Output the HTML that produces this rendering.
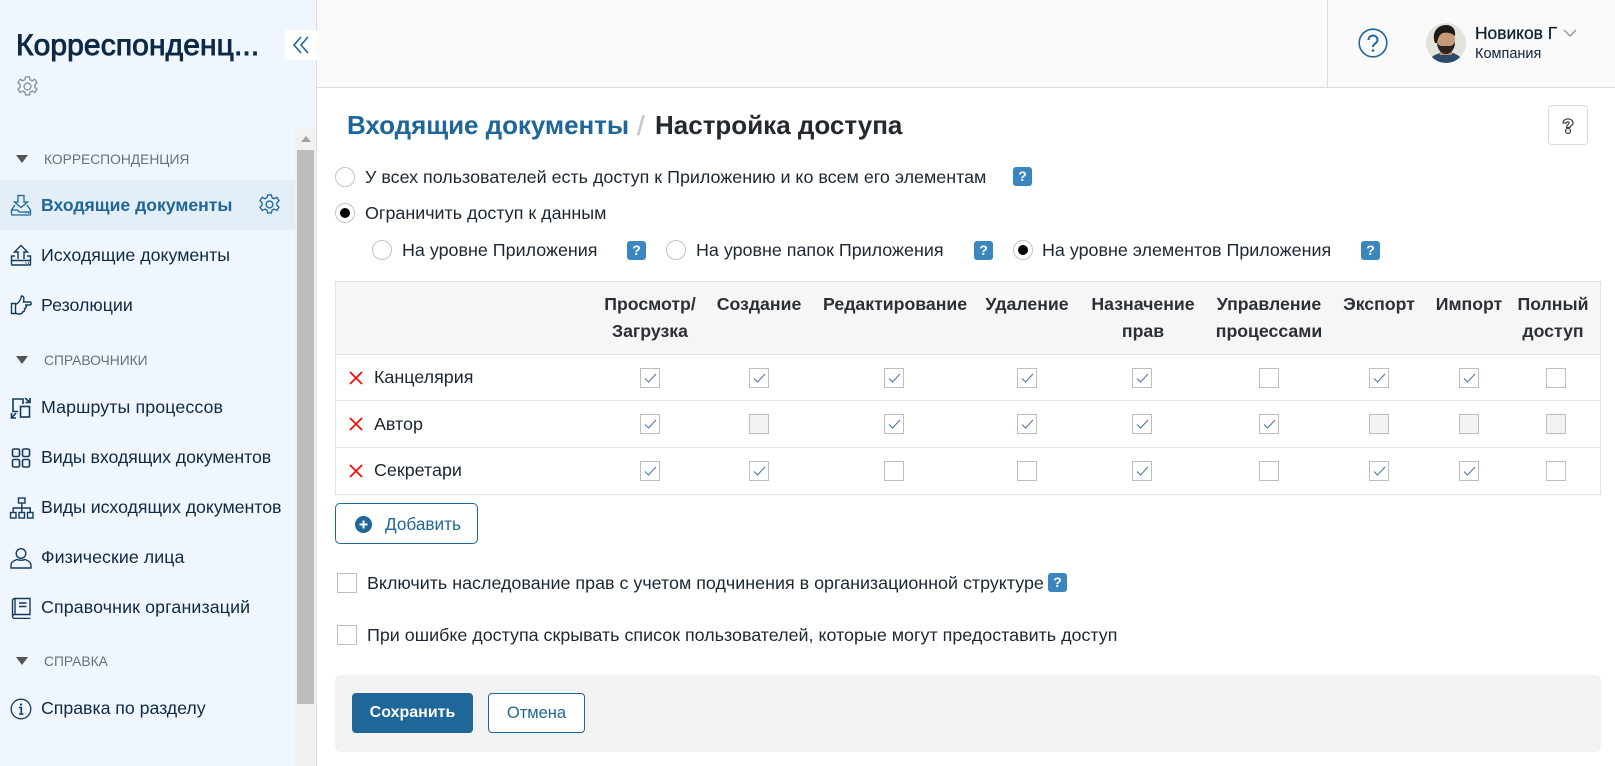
<!DOCTYPE html>
<html lang="ru"><head><meta charset="utf-8"><title>Настройка доступа</title>
<style>
*{box-sizing:border-box}
html,body{margin:0;padding:0}
body{width:1615px;height:766px;overflow:hidden;position:relative;background:#fff;font-family:"Liberation Sans",sans-serif;color:#1b2733;font-size:17.9px}
.a{position:absolute}
.t{position:absolute;white-space:nowrap;line-height:24px;height:24px}
.m{-webkit-text-stroke:.3px currentColor}
.n{font-size:17.8px;color:#0f2a45;left:41px}
.s{font-size:13.8px;color:#66717c;left:44px;line-height:18px;height:18px}
.tri{position:absolute;left:16px;width:0;height:0;border-left:6.5px solid transparent;border-right:6.5px solid transparent;border-top:8px solid #555}
.ic{position:absolute;left:10px;width:22px;height:22px;fill:none;stroke:#143a5c;stroke-width:1.4}
.r{position:absolute;width:20px;height:20px;border:1px solid #c4c4c4;border-radius:50%;background:#fff}
.r.on::after{content:"";position:absolute;left:4px;top:4px;width:10px;height:10px;border-radius:50%;background:#000}
.b{position:absolute;width:19px;height:19px;background:#3a87bf;border-radius:3px;color:#fff;font-weight:bold;font-size:14px;line-height:19px;text-align:center}
.h{position:absolute;width:140px;text-align:center;font-size:17.7px;font-weight:bold;line-height:27px;color:#2b3036;white-space:nowrap}
.l{position:absolute;left:335px;width:1266px;height:1px;background:#e3e3e8}
.c{position:absolute;width:20px;height:20px;border:1px solid #bdbdbd;background:#fff}
.c.d{background:#f3f3f3}
.c svg{position:absolute;left:3px;top:3px;width:13px;height:13px;fill:none;stroke:#4a6fa8;stroke-width:1}
.x{position:absolute;left:349px;width:14px;height:14px;fill:none;stroke:#f00;stroke-width:1.6}
</style></head><body>

<!-- sidebar -->
<div class="a" style="left:0;top:0;width:317px;height:766px;background:#f0f6fe;border-right:1px solid #dcdcdc"></div>
<div class="t" style="left:16px;top:26px;font-size:30px;line-height:40px;height:40px;color:#0c2a46;-webkit-text-stroke:.9px #0c2a46;letter-spacing:.1px">Корреспонденц...</div>
<div class="a" style="left:285px;top:30px;width:32px;height:30px;background:#fff;border-radius:3px 0 0 3px"></div>
<svg class="a" style="left:291px;top:34px" width="20" height="22" viewBox="0 0 20 22" fill="none" stroke="#1f6699" stroke-width="1.6"><path d="M10 3L3 11l7 8M17 3l-7 8 7 8"/></svg>
<svg class="a" style="left:16px;top:75px" width="23" height="23" viewBox="0 0 24 24" fill="none" stroke="#8a8f94" stroke-width="1.4"><circle cx="12" cy="12" r="3.6"/><path d="M10 2h4l.7 3 2.2 1 2.7-1.500 2.300 3.500-2.200 2.200v2.400l2.200 2.200-2.300 3.500-2.700-1.500-2.200 1-.7 3h-4l-.7-3-2.200-1-2.700 1.500-2.300-3.500 2.200-2.200v-2.400L2.100 8l2.300-3.500L7.100 6l2.200-1z"/></svg>

<div class="a" style="left:295px;top:129px;width:21px;height:637px;background:#f1f1f1"></div>
<div class="a" style="left:301px;top:136px;width:0;height:0;border-left:5px solid transparent;border-right:5px solid transparent;border-bottom:6px solid #a3a3a3"></div>
<div class="a" style="left:297px;top:150px;width:17px;height:554px;background:#bdbdbd"></div>

<div class="tri" style="top:155px"></div>
<div class="t s" style="top:151px">КОРРЕСПОНДЕНЦИЯ</div>
<div class="a" style="left:0;top:180px;width:295px;height:50px;background:#e4eef6"></div>
<svg class="ic" style="top:194px;stroke:#1f6699;stroke-width:1.3" viewBox="0 0 22 22"><path d="M8 1.500h6v6.500h3.500L11 13.500 4.500 8H8zM5 11L1.500 16v4a1 1 0 0 0 1 1h17a1 1 0 0 0 1-1v-4L17 11M1.500 16h6l1.500 2h11.500M15.500 19h1M18 19h1"/></svg>
<div class="t n" style="top:193px;font-size:17.6px;color:#1f6699;font-weight:bold">Входящие документы</div>
<svg class="a" style="left:258px;top:193px" width="23" height="23" viewBox="0 0 24 24" fill="none" stroke="#1f6699" stroke-width="1.4"><circle cx="12" cy="12" r="3.600"/><path d="M10 2h4l.7 3 2.200 1 2.700-1.500 2.300 3.500-2.200 2.200v2.400l2.200 2.200-2.300 3.500-2.700-1.500-2.200 1-.7 3h-4l-.7-3-2.200-1-2.700 1.500-2.300-3.500 2.200-2.200v-2.400L2.100 8l2.300-3.500L7.100 6l2.200-1z"/></svg>

<svg class="ic" style="top:244px" viewBox="0 0 22 22"><path d="M8 15v-7H4.500L11 1.500 17.500 8H14v7M5 12H1.500v8.500a.5.500 0 0 0 .5.500h18a.5.500 0 0 0 .5-.5V12H17M1.500 16.500H20.500M15.500 19h1M18 19h1"/></svg>
<div class="t n" style="top:243px">Исходящие документы</div>
<svg class="ic" style="top:294px" viewBox="0 0 22 22"><path d="M1.500 9.500h4v10h-4zM5.500 10.500c3-1 5-4 6-8.500 2 0 3 1.500 2 6h6.500c1.500 0 1.500 3 0 3h-5M16 11c1 2-.5 3.500-1.500 3.500 .5 2-.5 3.500-2 3.500 0 1-1 2-2 2H8l-2.500-1"/></svg>
<div class="t n" style="top:293px">Резолюции</div>

<div class="tri" style="top:356px"></div>
<div class="t s" style="top:352px">СПРАВОЧНИКИ</div>
<svg class="ic" style="top:397px;stroke-width:1.6" viewBox="0 0 22 22"><rect x="10.500" y="9.500" width="9" height="10.500"/><path d="M8 14.500H3V2h10v5M15 1l5 4.500M20 1v4.500h-4.500M1.500 21l4.500-5M1.500 16v5H6"/></svg>
<div class="t n" style="top:395px;letter-spacing:.11px">Маршруты процессов</div>
<svg class="ic" style="top:447px;stroke-width:1.6" viewBox="0 0 22 22"><rect x="2.500" y="2" width="7" height="7.500" rx="1.500"/><rect x="12.500" y="2" width="7" height="7.500" rx="1.500"/><rect x="2.500" y="12.500" width="7" height="7.500" rx="1.500"/><rect x="12.500" y="12.500" width="7" height="7.500" rx="1.500"/></svg>
<div class="t n" style="top:445px;letter-spacing:-.08px">Виды входящих документов</div>
<svg class="ic" style="top:497px;left:9px;width:26px;height:22px" viewBox="0 0 26 22"><rect x="9.500" y="1" width="6.500" height="5"/><rect x="1.500" y="15.500" width="5.500" height="5.500"/><rect x="10" y="15.500" width="5.500" height="5.500"/><rect x="18.500" y="15.500" width="5.500" height="5.500"/><path d="M12.800 6v9.500M4.200 15.500V11h17v4.500"/></svg>
<div class="t n" style="top:495px;letter-spacing:-.04px">Виды исходящих документов</div>
<svg class="ic" style="top:547px" viewBox="0 0 22 22"><circle cx="11" cy="6.500" r="4.800"/><path d="M1 21v-3c0-3 3-4.500 6-5.500 2 1 6 1 8 0 3 1 6 2.500 6 5.500v3z"/></svg>
<div class="t n" style="top:545px;letter-spacing:.06px">Физические лица</div>
<svg class="ic" style="top:597px" viewBox="0 0 22 22"><path d="M5 1.500h15v16H5M5 1.500C3 1.500 2.500 2.500 2.500 4v15c0 1.500 1 2.500 2.500 2.500h15.500M5 1.500v16c-1.500 0-2.500.5-2.500 1.500M9 6h7.500M9 9.500h7.500"/></svg>
<div class="t n" style="top:595px;letter-spacing:.13px">Справочник организаций</div>

<div class="tri" style="top:657px"></div>
<div class="t s" style="top:653px">СПРАВКА</div>
<svg class="ic" style="top:698px;stroke-width:1.3" viewBox="0 0 22 22"><circle cx="11" cy="11" r="9.800"/><circle cx="11" cy="6.500" r="1.100" fill="#143a5c" stroke="none"/><path d="M9 9.500h2.300v6.500M9 16h4.500" stroke-width="1.600"/></svg>
<div class="t n" style="top:696px;letter-spacing:-.05px">Справка по разделу</div>

<!-- header -->
<div class="a" style="left:317px;top:0;width:1298px;height:88px;background:#fafafa;border-bottom:1px solid #dcdcdc"></div>
<div class="a" style="left:1327px;top:0;width:1px;height:87px;background:#dcdcdc"></div>
<svg class="a" style="left:1358px;top:28px" width="30" height="30" viewBox="0 0 30 30" fill="none" stroke="#1f6699" stroke-width="1.600"><circle cx="15" cy="15" r="13.800"/><path d="M10.500 12c0-6 9-6 9 0 0 3.500-4.500 3.500-4.500 7" stroke-width="2"/><circle cx="15" cy="22.500" r="1.300" fill="#1f6699" stroke="none"/></svg>
<svg class="a" style="left:1426px;top:23px" width="40" height="40" viewBox="0 0 40 40"><defs><clipPath id="av"><circle cx="20" cy="20" r="20"/></clipPath></defs><g clip-path="url(#av)"><rect width="40" height="40" fill="#e4e2dc"/><path d="M3 40C4 33 10 31 15 30h12c5 2 9 4 10 10z" fill="#2c4a6b"/><rect x="14" y="24" width="12" height="8" fill="#b98a6a"/><ellipse cx="20" cy="17" rx="9" ry="12" fill="#c49a78"/><path d="M11 19c0 7 4 12 9 12s9-5 9-12c-2 3-3 4-5 4h-8c-2 0-4-1-5-4z" fill="#2b231e"/><path d="M9 20C5 9 12 2 20 2c6 0 10 4 9 11-3-3-8-4-12-3-3 1-5 4-6 10z" fill="#1d1917"/></g></svg>
<div class="t m" style="left:1475px;top:21px;font-size:17.4px;color:#0f2238">Новиков Г</div>
<svg class="a" style="left:1563px;top:29px" width="14" height="9" viewBox="0 0 14 9" fill="none" stroke="#8a949c" stroke-width="1.300"><path d="M1 1l6 6 6-6"/></svg>
<div class="t" style="left:1475px;top:42px;font-size:14.5px;color:#0f2238">Компания</div>

<!-- title -->
<div class="t" style="left:347px;top:108px;height:34px;line-height:34px;font-size:26px;font-weight:bold;letter-spacing:-.05px;color:#1f6699">Входящие документы</div>
<div class="t" style="left:637px;top:109px;height:34px;line-height:34px;font-size:27px;color:#c9c9c9;-webkit-text-stroke:.6px #c9c9c9">/</div>
<div class="t" style="left:655px;top:108px;height:34px;line-height:34px;font-size:26px;font-weight:bold;color:#23292f">Настройка доступа</div>
<div class="a" style="left:1548px;top:105px;width:40px;height:40px;border:1px solid #dcdcdc;border-radius:4px;background:#fff"></div>
<svg class="a" style="left:1561px;top:118px" width="14" height="17" viewBox="0 0 14 17" fill="none" stroke="#444" stroke-width="1.200"><path d="M2 5c0-5.500 10-5.500 10 0 0 3-3 2-3 4.500H5.500C5.500 6.500 8 7 8 5 8 3.500 5.500 3.500 5.500 5z"/><circle cx="7" cy="13" r="2.500"/></svg>

<!-- radios -->
<div class="r" style="left:335px;top:167px"></div>
<div class="t" style="left:365px;top:165px">У всех пользователей есть доступ к Приложению и ко всем его элементам</div>
<div class="b" style="left:1013px;top:167px">?</div>
<div class="r on" style="left:335px;top:203px"></div>
<div class="t" style="left:365px;top:201px">Ограничить доступ к данным</div>
<div class="r" style="left:372px;top:240px"></div>
<div class="t" style="left:402px;top:238px">На уровне Приложения</div>
<div class="b" style="left:627px;top:241px">?</div>
<div class="r" style="left:666px;top:240px"></div>
<div class="t" style="left:696px;top:238px">На уровне папок Приложения</div>
<div class="b" style="left:974px;top:241px">?</div>
<div class="r on" style="left:1013px;top:240px"></div>
<div class="t" style="left:1042px;top:238px">На уровне элементов Приложения</div>
<div class="b" style="left:1361px;top:241px">?</div>

<!-- table -->
<div class="a" style="left:335px;top:281px;width:1266px;height:214px;border:1px solid #e3e3e8;border-top-width:1px"></div>
<div class="a" style="left:336px;top:282px;width:1264px;height:72px;background:#f6f6f6"></div>
<div class="l" style="top:354px"></div><div class="l" style="top:400px"></div><div class="l" style="top:447px"></div>

<div class="h" style="left:580px;top:291px">Просмотр/<br>Загрузка</div>
<div class="h" style="left:689px;top:291px">Создание</div>
<div class="h" style="left:823px;top:291px">Редактирование</div>
<div class="h" style="left:957px;top:291px">Удаление</div>
<div class="h" style="left:1073px;top:291px">Назначение<br>прав</div>
<div class="h" style="left:1199px;top:291px">Управление<br>процессами</div>
<div class="h" style="left:1309px;top:291px">Экспорт</div>
<div class="h" style="left:1399px;top:291px">Импорт</div>
<div class="h" style="left:1483px;top:291px">Полный<br>доступ</div>

<svg class="x" style="top:371px" viewBox="0 0 14 14"><path d="M1 1l12 12M13 1L1 13"/></svg>
<div class="t" style="left:374px;top:365px">Канцелярия</div>
<svg class="x" style="top:417px" viewBox="0 0 14 14"><path d="M1 1l12 12M13 1L1 13"/></svg>
<div class="t" style="left:374px;top:412px">Автор</div>
<svg class="x" style="top:464px" viewBox="0 0 14 14"><path d="M1 1l12 12M13 1L1 13"/></svg>
<div class="t" style="left:374px;top:458px">Секретари</div>

<!-- row 1 -->
<div class="c" style="left:640px;top:368px"><svg viewBox="0 0 13 13"><path d="M1 6.500l3.500 3.500L12 2"/></svg></div>
<div class="c" style="left:749px;top:368px"><svg viewBox="0 0 13 13"><path d="M1 6.500l3.500 3.500L12 2"/></svg></div>
<div class="c" style="left:884px;top:368px"><svg viewBox="0 0 13 13"><path d="M1 6.500l3.500 3.500L12 2"/></svg></div>
<div class="c" style="left:1017px;top:368px"><svg viewBox="0 0 13 13"><path d="M1 6.500l3.500 3.500L12 2"/></svg></div>
<div class="c" style="left:1132px;top:368px"><svg viewBox="0 0 13 13"><path d="M1 6.500l3.500 3.500L12 2"/></svg></div>
<div class="c" style="left:1259px;top:368px"></div>
<div class="c" style="left:1369px;top:368px"><svg viewBox="0 0 13 13"><path d="M1 6.500l3.500 3.500L12 2"/></svg></div>
<div class="c" style="left:1459px;top:368px"><svg viewBox="0 0 13 13"><path d="M1 6.500l3.500 3.500L12 2"/></svg></div>
<div class="c" style="left:1546px;top:368px"></div>
<!-- row 2 -->
<div class="c" style="left:640px;top:414px"><svg viewBox="0 0 13 13"><path d="M1 6.500l3.500 3.500L12 2"/></svg></div>
<div class="c d" style="left:749px;top:414px"></div>
<div class="c" style="left:884px;top:414px"><svg viewBox="0 0 13 13"><path d="M1 6.500l3.500 3.500L12 2"/></svg></div>
<div class="c" style="left:1017px;top:414px"><svg viewBox="0 0 13 13"><path d="M1 6.500l3.500 3.500L12 2"/></svg></div>
<div class="c" style="left:1132px;top:414px"><svg viewBox="0 0 13 13"><path d="M1 6.500l3.500 3.500L12 2"/></svg></div>
<div class="c" style="left:1259px;top:414px"><svg viewBox="0 0 13 13"><path d="M1 6.500l3.500 3.500L12 2"/></svg></div>
<div class="c d" style="left:1369px;top:414px"></div>
<div class="c d" style="left:1459px;top:414px"></div>
<div class="c d" style="left:1546px;top:414px"></div>
<!-- row 3 -->
<div class="c" style="left:640px;top:461px"><svg viewBox="0 0 13 13"><path d="M1 6.500l3.500 3.500L12 2"/></svg></div>
<div class="c" style="left:749px;top:461px"><svg viewBox="0 0 13 13"><path d="M1 6.500l3.500 3.500L12 2"/></svg></div>
<div class="c" style="left:884px;top:461px"></div>
<div class="c" style="left:1017px;top:461px"></div>
<div class="c" style="left:1132px;top:461px"><svg viewBox="0 0 13 13"><path d="M1 6.500l3.500 3.500L12 2"/></svg></div>
<div class="c" style="left:1259px;top:461px"></div>
<div class="c" style="left:1369px;top:461px"><svg viewBox="0 0 13 13"><path d="M1 6.500l3.500 3.500L12 2"/></svg></div>
<div class="c" style="left:1459px;top:461px"><svg viewBox="0 0 13 13"><path d="M1 6.500l3.500 3.500L12 2"/></svg></div>
<div class="c" style="left:1546px;top:461px"></div>

<!-- add -->
<div class="a" style="left:335px;top:503px;width:143px;height:41px;border:1px solid #1f6699;border-radius:5px;background:#fff"></div>
<svg class="a" style="left:355px;top:516px" width="17" height="17" viewBox="0 0 17 17"><circle cx="8.500" cy="8.500" r="8.500" fill="#1f6699"/><path d="M8.500 4.500v8M4.500 8.500h8" stroke="#fff" stroke-width="2"/></svg>
<div class="t" style="left:385px;top:512px;color:#1f6699;font-size:17.2px">Добавить</div>

<!-- options -->
<div class="c" style="left:337px;top:573px"></div>
<div class="t" style="left:367px;top:571px">Включить наследование прав с учетом подчинения в организационной структуре</div>
<div class="b" style="left:1048px;top:573px">?</div>
<div class="c" style="left:337px;top:625px"></div>
<div class="t" style="left:367px;top:623px">При ошибке доступа скрывать список пользователей, которые могут предоставить доступ</div>

<!-- footer -->
<div class="a" style="left:335px;top:675px;width:1266px;height:77px;background:#f2f2f2;border-radius:5px"></div>
<div class="a" style="left:352px;top:693px;width:121px;height:40px;background:#1f6699;border-radius:4px;color:#fff;font-weight:bold;font-size:16px;line-height:40px;text-align:center">Сохранить</div>
<div class="a" style="left:488px;top:693px;width:97px;height:40px;background:#fff;border:1px solid #1f6699;border-radius:4px;color:#1f6699;font-size:16.500px;line-height:38px;text-align:center">Отмена</div>
</body></html>
